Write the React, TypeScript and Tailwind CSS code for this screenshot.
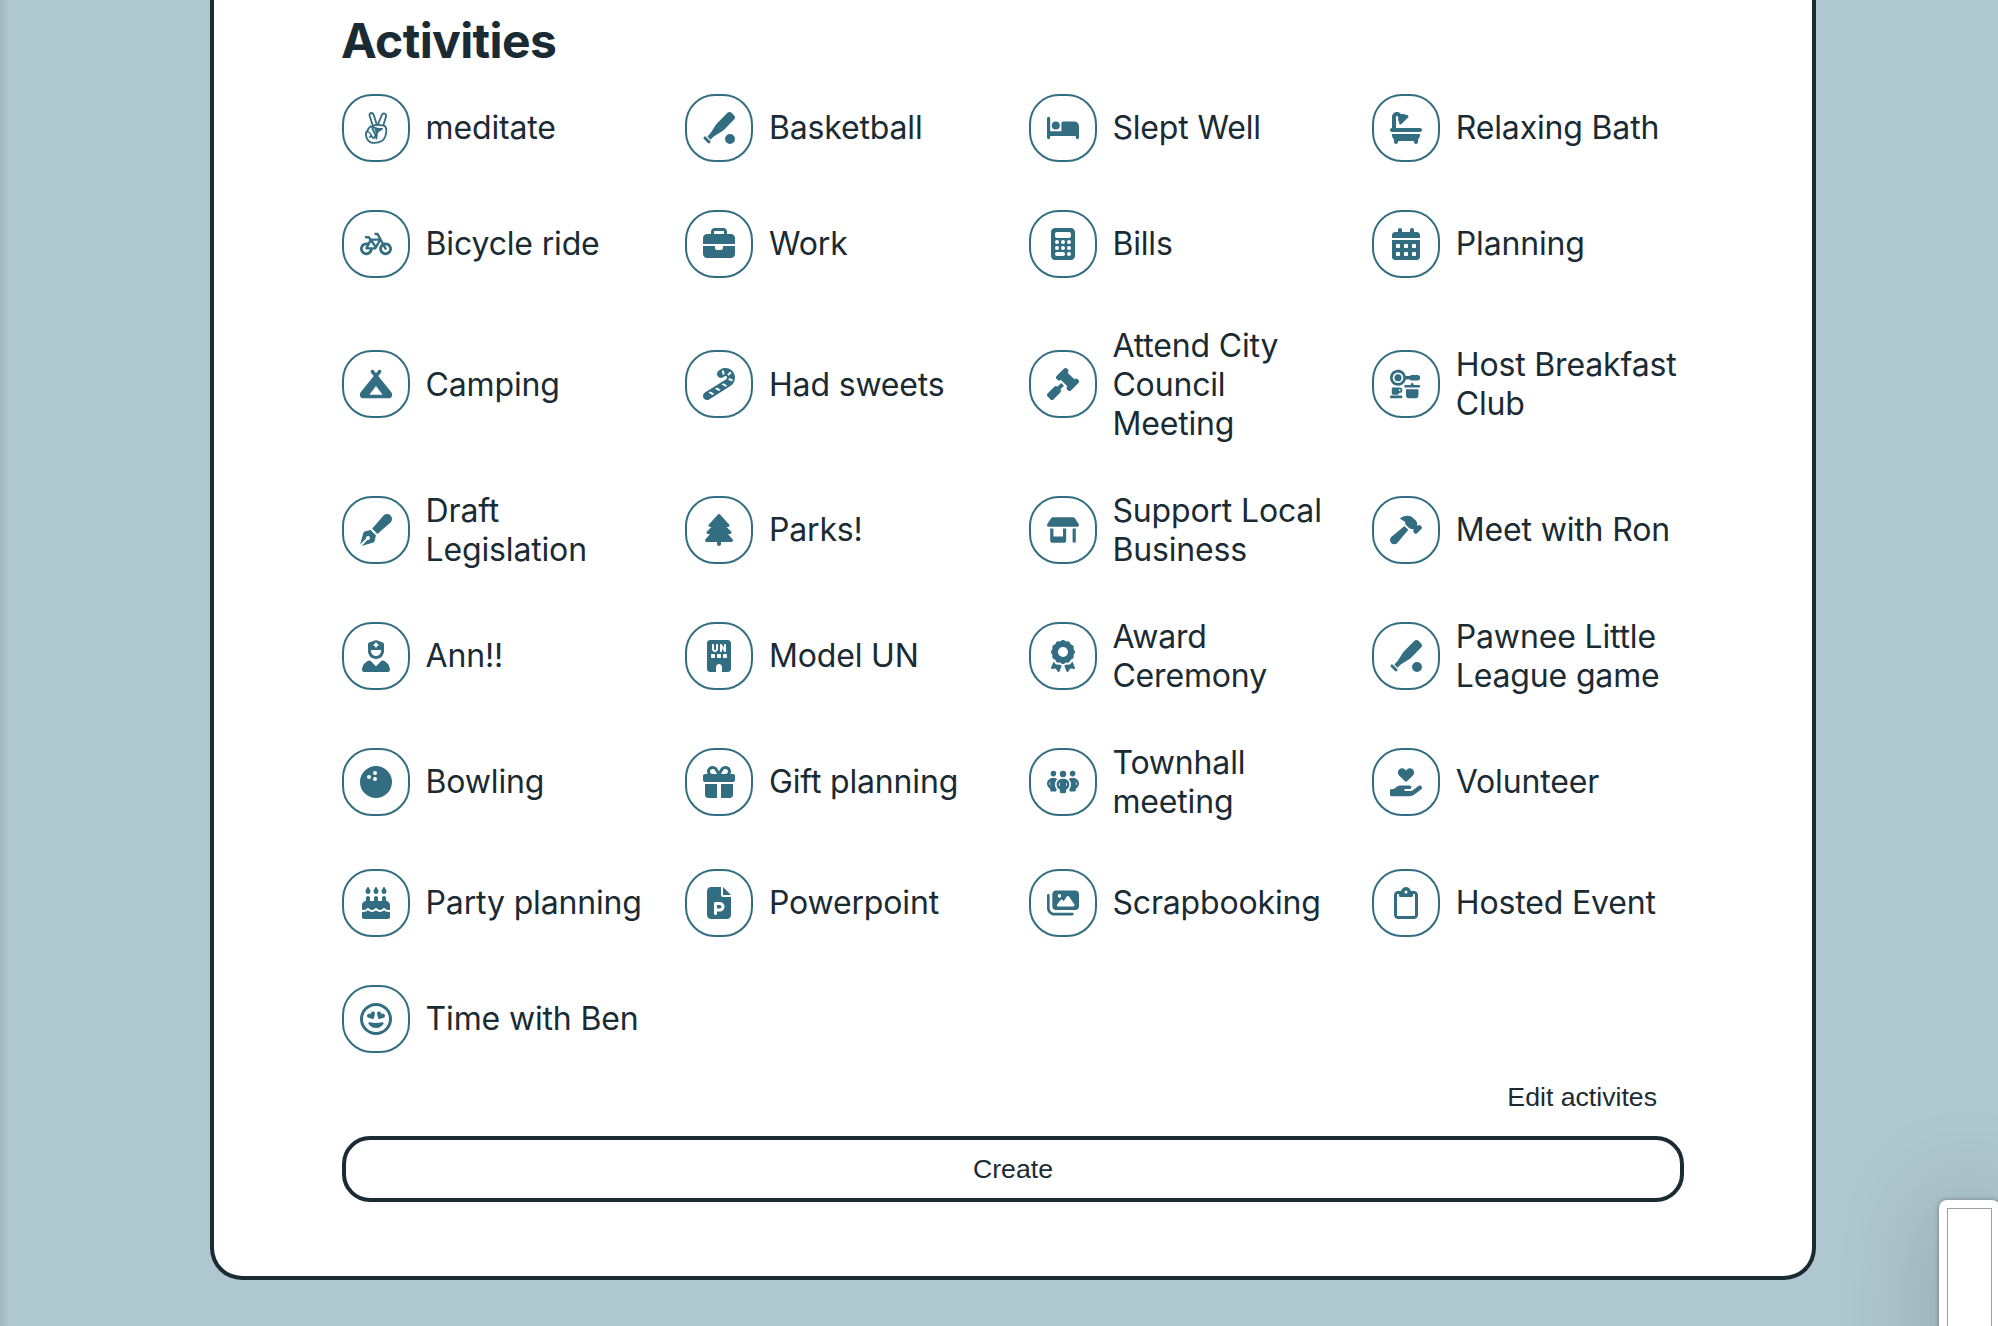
import type { ComponentType } from "react";
import {
  FaAward,
  FaBaseballBatBall,
  FaBath,
  FaBed,
  FaBicycle,
  FaBowlingBall,
  FaBriefcase,
  FaBuildingUn,
  FaCakeCandles,
  FaCalculator,
  FaCalendarDays,
  FaCampground,
  FaCandyCane,
  FaFilePowerpoint,
  FaGavel,
  FaGift,
  FaHammer,
  FaHandHoldingHeart,
  FaImages,
  FaKitchenSet,
  FaPenFancy,
  FaPeopleGroup,
  FaRegClipboard,
  FaRegFaceGrinHearts,
  FaShop,
  FaTree,
  FaUserNurse,
} from "react-icons/fa6";

type Activity = { label: string; icon: ComponentType<{ size?: number }> };

/** Outlined victory hand. */
function VictoryHand({ size = 32 }: { size?: number }) {
  return (
    <svg
      width={size}
      height={size}
      viewBox="0 0 96 96"
      fill="none"
      stroke="currentColor"
      strokeWidth="5.5"
      strokeLinecap="round"
      strokeLinejoin="round"
    >
      <path d="M38 40 L29 12 Q27 4 34 3 Q39 3 41 8 L50 37" />
      <path d="M54 37 L65 10 Q68 3 74 5 Q80 8 78 14 L70 40" />
      <path d="M38 42 Q46 38 56 39 L70 40 Q80 43 79 56 Q78 78 66 86 Q50 96 32 91 Q20 84 18 70 Q16 62 22 57" />
      <path d="M22 58 Q25 48 32 43 Q37 43 38 51 L46 68 Q46 79 39 78 L33 70" />
      <path d="M22 60 Q28 58 32 67 Q35 75 28 75" strokeWidth="4" />
      <path d="M38 44 Q46 50 66 51 Q54 56 51 63 L49 80" />
      <path d="M44 50 L62 52 L51 60 L48 68 Z" fill="currentColor" stroke="none" />
    </svg>
  );
}

const activities: Activity[] = [
  { label: "meditate", icon: VictoryHand },
  { label: "Basketball", icon: FaBaseballBatBall },
  { label: "Slept Well", icon: FaBed },
  { label: "Relaxing Bath", icon: FaBath },
  { label: "Bicycle ride", icon: FaBicycle },
  { label: "Work", icon: FaBriefcase },
  { label: "Bills", icon: FaCalculator },
  { label: "Planning", icon: FaCalendarDays },
  { label: "Camping", icon: FaCampground },
  { label: "Had sweets", icon: FaCandyCane },
  { label: "Attend City Council Meeting", icon: FaGavel },
  { label: "Host Breakfast Club", icon: FaKitchenSet },
  { label: "Draft Legislation", icon: FaPenFancy },
  { label: "Parks!", icon: FaTree },
  { label: "Support Local Business", icon: FaShop },
  { label: "Meet with Ron", icon: FaHammer },
  { label: "Ann!!", icon: FaUserNurse },
  { label: "Model UN", icon: FaBuildingUn },
  { label: "Award Ceremony", icon: FaAward },
  { label: "Pawnee Little League game", icon: FaBaseballBatBall },
  { label: "Bowling", icon: FaBowlingBall },
  { label: "Gift planning", icon: FaGift },
  { label: "Townhall meeting", icon: FaPeopleGroup },
  { label: "Volunteer", icon: FaHandHoldingHeart },
  { label: "Party planning", icon: FaCakeCandles },
  { label: "Powerpoint", icon: FaFilePowerpoint },
  { label: "Scrapbooking", icon: FaImages },
  { label: "Hosted Event", icon: FaRegClipboard },
  { label: "Time with Ben", icon: FaRegFaceGrinHearts },
];

function ActivityItem({ label, icon: Icon }: Activity) {
  return (
    <label className="flex items-center gap-[15.6px]">
      <span className="mb-px flex size-[68px] shrink-0 items-center justify-center rounded-[30px] border-2 border-[#336d82] text-[#336d82]">
        <Icon size={32} />
      </span>
      <span className="mb-px">{label}</span>
    </label>
  );
}

export default function App() {
  return (
    <div className="relative flex h-[1326px] justify-center overflow-hidden bg-[#afc7ce] font-['Inter',sans-serif] text-[#1a2b33]">
      <div className="absolute inset-y-0 left-0 w-2 bg-linear-to-r from-black/8 to-transparent" />
      <main className="ml-[28px] h-[1280px] w-[1606px] rounded-b-[32px] border-4 border-t-0 border-[#1a2b33] bg-white px-[128px] pt-[13px]">
        <h2 className="-ml-px text-[48px] leading-[56px] font-bold tracking-[-0.013em]">Activities</h2>
        <div className="mt-[25px] grid grid-cols-4 grid-rows-[68px_68px_117px_78px_78px_78px_68px_68px] gap-x-[31.6px] gap-y-12 text-[32px] leading-[39px] tracking-[-0.005em]">
          {activities.map((activity) => (
            <ActivityItem key={activity.label} {...activity} />
          ))}
        </div>
        <div className="mt-[24px] flex justify-end pr-[27px] font-['Liberation_Sans',Arial,sans-serif] text-[26.67px] leading-[40px]">
          <button>Edit activites</button>
        </div>
        <button className="mt-[19px] h-[66px] w-full rounded-[28px] border-4 border-[#1a2b33] font-['Liberation_Sans',Arial,sans-serif] text-[26.67px]">
          Create
        </button>
      </main>
      <aside className="absolute top-[1200px] left-[1939px] h-[400px] w-[61px] rounded-[8px] bg-white p-2 shadow-[0_0_100px_rgba(0,0,0,0.22),0_0_4px_rgba(0,0,0,0.35)]">
        <div className="h-full w-[45px] border border-[#a0a0a0]" />
      </aside>
    </div>
  );
}
